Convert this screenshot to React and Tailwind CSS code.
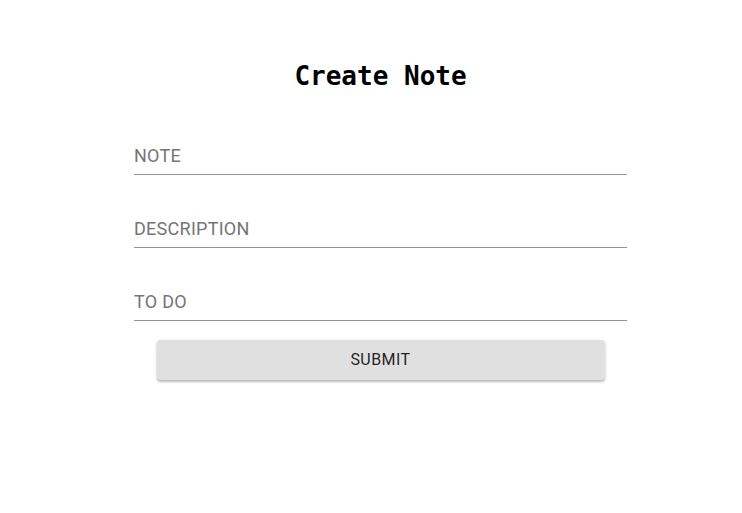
import React from 'react'

// ─── Champ de saisie façon "standard" ───────────────────────────────
function Field({ label, className = '' }) {
  return (
    <div className={`pt-[16px] pb-[8px] border-b border-[#949494] ${className}`}>
      <span className="block text-[18px] leading-[20px] tracking-[0.015em] text-[#757575]">{label}</span>
    </div>
  )
}

export default function App() {
  return (
    <div className="min-h-[513px] bg-white" style={{ fontFamily: 'Roboto, sans-serif' }}>
      <div className="w-[493px] ml-[134px] pt-[61px] flex flex-col">
        <h1
          className="text-center text-[26px] leading-[30px] font-bold text-black"
          style={{ fontFamily: '"DejaVu Sans Mono", monospace' }}
        >
          Create Note
        </h1>
        <form className="mt-[39px] flex flex-col">
          <Field label="NOTE" />
          <Field label="DESCRIPTION" className="mt-7" />
          <Field label="TO DO" className="mt-7" />
          <button
            type="button"
            className="mt-[19px] mx-auto w-[448px] h-[40px] rounded bg-[#e0e0e0] text-[16px] tracking-[0.02857em] text-[rgba(0,0,0,0.87)] shadow-[0_2px_2px_rgba(0,0,0,0.2),0_1px_4px_rgba(0,0,0,0.12)]"
          >
            SUBMIT
          </button>
        </form>
      </div>
    </div>
  )
}
